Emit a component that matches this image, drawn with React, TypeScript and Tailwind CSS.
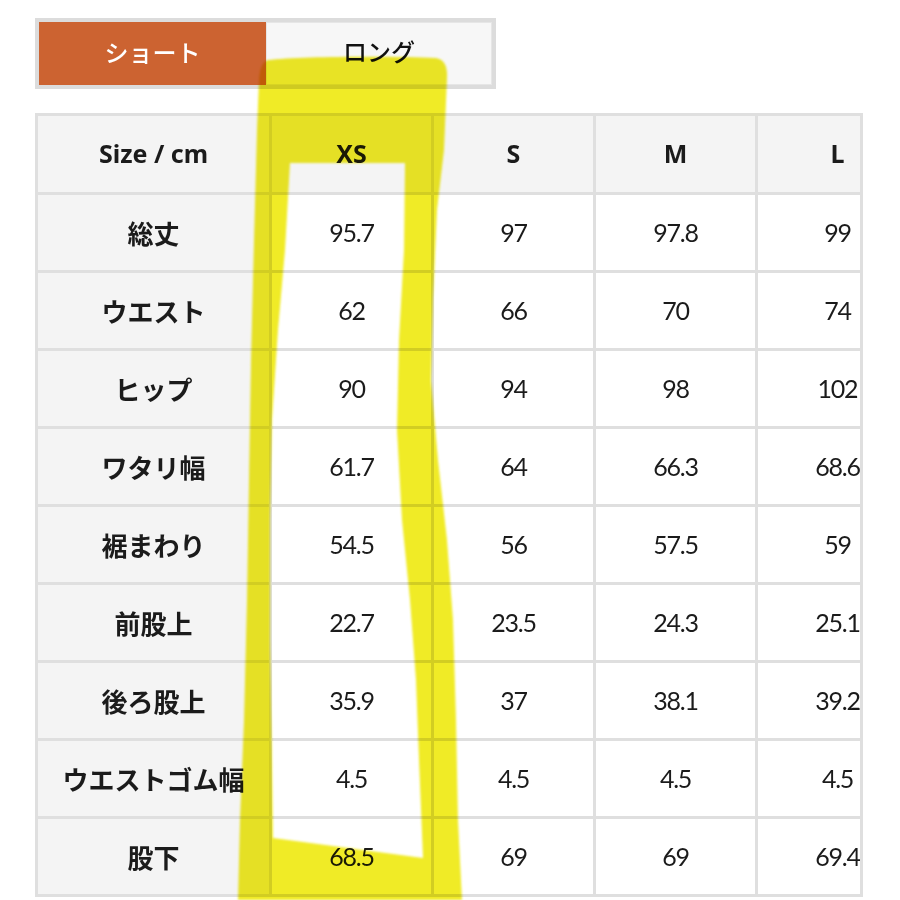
const sizes = ['XS', 'S', 'M', 'L'];

const rows: { label: string; values: string[] }[] = [
  { label: '総丈', values: ['95.7', '97', '97.8', '99'] },
  { label: 'ウエスト', values: ['62', '66', '70', '74'] },
  { label: 'ヒップ', values: ['90', '94', '98', '102'] },
  { label: 'ワタリ幅', values: ['61.7', '64', '66.3', '68.6'] },
  { label: '裾まわり', values: ['54.5', '56', '57.5', '59'] },
  { label: '前股上', values: ['22.7', '23.5', '24.3', '25.1'] },
  { label: '後ろ股上', values: ['35.9', '37', '38.1', '39.2'] },
  { label: 'ウエストゴム幅', values: ['4.5', '4.5', '4.5', '4.5'] },
  { label: '股下', values: ['68.5', '69', '69', '69.4'] },
];

function Highlighter() {
  // marker stroke drawn over the XS column
  return (
    <svg
      className="pointer-events-none absolute left-0 top-0 mix-blend-multiply"
      width="900"
      height="900"
      viewBox="0 0 900 900"
    >
      <defs>
        <filter id="soft" x="-5%" y="-5%" width="110%" height="110%">
          <feGaussianBlur stdDeviation="1.2" />
        </filter>
      </defs>
      <path
        filter="url(#soft)"
        fill="#f0eb28"
        fillRule="evenodd"
        d="M 268 60 C 300 56 400 56 436 58 Q 448 60 447 78 L 444 150 L 437 210 L 433 300 L 431 380 L 438 460 L 447 540 L 453 620 L 456 720 L 458 820 L 462 900 L 238 900 L 240 820 L 244 720 L 247 600 L 249 480 L 251 360 L 254 240 L 257 130 L 259 80 Q 260 62 268 60 Z
           M 290 163 L 405 163 L 404 250 L 399 340 L 397 430 L 402 520 L 410 600 L 416 680 L 419 760 L 423 858 L 273 838 L 272 760 L 270 640 L 270 520 L 272 420 L 278 330 L 285 250 Z"
      />
    </svg>
  );
}

export default function App() {
  return (
    <div className="relative h-[900px] w-[900px] overflow-hidden bg-white font-['Noto_Sans','Noto_Sans_CJK_JP',sans-serif] text-[#1b1b1b]">
      {/* tabs */}
      <div className="ml-[35px] mt-[18px] flex h-[71px] w-[461px] border-4 border-[#dcdcdc] bg-[#f7f7f7]">
        <div className="flex w-[227px] items-center justify-center bg-[#cc6331] pb-[2px] text-[24px] font-medium text-white">
          ショート
        </div>
        <div className="flex flex-1 items-center justify-center border border-[#e6e6e6] pb-[3px] text-[24px] font-medium text-[#111]">
          ロング
        </div>
      </div>

      {/* size table */}
      <div className="ml-[35px] mt-[24px] w-[828px] overflow-hidden border-x-[3px] border-t-[3px] border-[#dfdfdf]">
        <div className="grid w-[882px] grid-cols-[234px_162px_162px_162px_162px]">
          <div className="flex h-[79px] items-center justify-center border-b-[3px] border-r-[3px] border-[#dfdfdf] bg-[#f4f4f4] text-[25px] font-bold">
            Size / cm
          </div>
          {sizes.map((s) => (
            <div
              key={s}
              className="flex h-[79px] items-center justify-center border-b-[3px] border-r-[3px] border-[#dfdfdf] bg-[#f4f4f4] text-[25px] font-bold"
            >
              {s}
            </div>
          ))}

          {rows.map((r) => (
            <div key={r.label} className="contents">
              <div className="flex h-[78px] items-center justify-center border-b-[3px] border-r-[3px] border-[#dfdfdf] bg-[#f4f4f4] font-['Noto_Sans_CJK_JP',sans-serif] text-[26px] font-bold">
                {r.label}
              </div>
              {r.values.map((v, i) => (
                <div
                  key={i}
                  className="flex h-[78px] items-center justify-center border-b-[3px] border-r-[3px] border-[#dfdfdf] bg-white font-['Lato',sans-serif] text-[25px] tracking-[-0.05em]"
                >
                  {v}
                </div>
              ))}
            </div>
          ))}
        </div>
      </div>

      <Highlighter />
    </div>
  );
}
